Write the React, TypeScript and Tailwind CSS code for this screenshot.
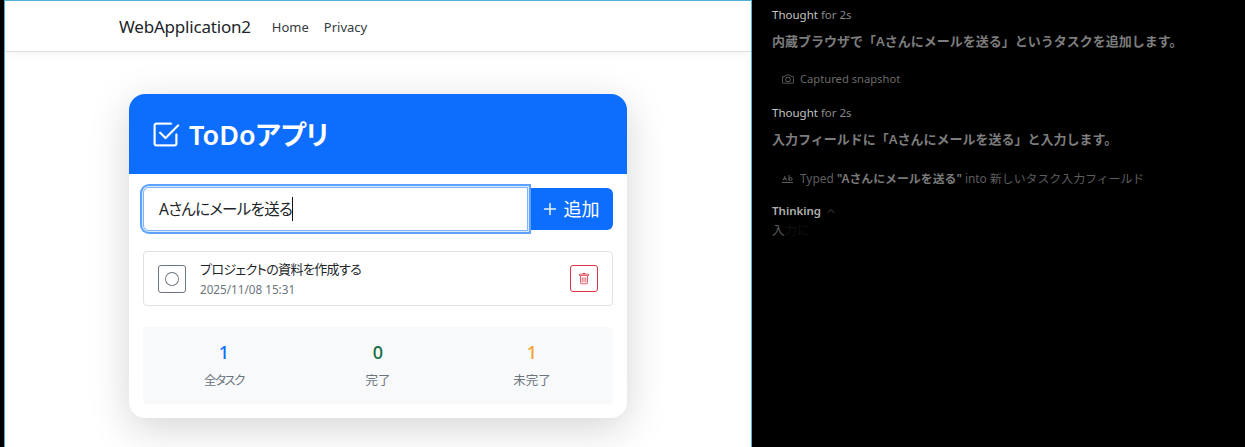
import { ChevronUp } from "lucide-react";
import { BsCheck2Square, BsPlusLg, BsTrash, BsCircle, BsCamera } from "react-icons/bs";

const FONT = "font-['Noto_Sans','Noto_Sans_CJK_JP',sans-serif]";

function Stat({ value, label, color, labelClass = "" }: { value: string; label: string; color: string; labelClass?: string }) {
  return (
    <div className="flex flex-1 flex-col items-center">
      <div className={`text-[18px] leading-[26px] font-medium ${color}`}>{value}</div>
      <div className={`mt-[7px] text-[12.5px] leading-[18px] text-[#6c757d] [font-feature-settings:'palt'] ${labelClass}`}>{label}</div>
    </div>
  );
}

function Todo() {
  return (
    <div className="mx-auto mt-[42px] w-[498px] rounded-[16px] bg-white shadow-[0_10px_40px_rgba(0,0,0,0.17)]">
      <div className="flex h-[80px] items-center gap-[9px] rounded-t-[16px] bg-[#0d6efd] px-[22px] text-white">
        <BsCheck2Square size={29} className="stroke-[0.2]" />
        <h1 className="text-[27px] leading-none font-semibold [font-feature-settings:'palt']">ToDoアプリ</h1>
      </div>
      <div className="px-[14px] pt-[13px] pb-[14px]">
        {/* input + add */}
        <div className="flex items-center">
          <div className="relative z-10 flex h-[44px] w-[385px] items-center rounded-l-[6px] border border-[#7db3fd] bg-white pl-[15px] text-[15.5px] tracking-[-0.7px] text-[#212529] shadow-[0_0_0_1px_#d8e8ff,0_0_0_3px_#5ea2fe] [font-feature-settings:'palt']">
            <span className="border-r border-[#111] leading-[24px]">Aさんにメールを送る</span>
          </div>
          <button className="flex h-[42px] flex-1 items-center justify-center gap-[6px] rounded-r-[6px] bg-[#0d6efd] text-[18px] text-white">
            <BsPlusLg size={16} className="stroke-[0.4]" />
            追加
          </button>
        </div>
        {/* item */}
        <div className="mt-[20px] flex h-[55px] items-center rounded-[4px] border border-[#dee2e6] px-[14px]">
          <div className="flex h-[28px] w-[28px] items-center justify-center rounded-[3px] border border-[#6c757d] text-[#6c757d]">
            <BsCircle size={14} />
          </div>
          <div className="ml-[14px] flex-1">
            <div className="-mt-[1px] text-[13px] leading-[18px] tracking-[-0.6px] text-[#212529] [font-feature-settings:'palt']">プロジェクトの資料を作成する</div>
            <div className="mt-[3px] text-[11.7px] leading-[16px] text-[#6c757d]">2025/11/08 15:31</div>
          </div>
          <button className="flex h-[27px] w-[28px] items-center justify-center rounded-[3px] border border-[#dc3545] text-[#dc3545]">
            <BsTrash size={12} />
          </button>
        </div>
        {/* stats */}
        <div className="mt-[21px] flex h-[77px] items-center rounded-[4px] bg-[#f8f9fa] px-[4px] pb-[3px]">
          <Stat value="1" label="全タスク" color="text-[#0d6efd]" labelClass="tracking-[-1.5px]" />
          <Stat value="0" label="完了" color="text-[#146c43]" />
          <Stat value="1" label="未完了" color="text-[#f4a331]" />
        </div>
      </div>
    </div>
  );
}

function Thought() {
  return (
    <div className="text-[11.5px] leading-[16px] text-[#c4c4c4]">
      Thought <span className="text-[#8a8a8a]">for 2s</span>
    </div>
  );
}

export default function App() {
  return (
    <div className={`${FONT} flex h-[447px] w-[1245px] overflow-hidden bg-black`}>
      {/* browser pane */}
      <div className="ml-[4px] h-full w-[748px] overflow-hidden border-x border-t border-[#4fb3d9] bg-white">
        <nav className="flex h-[51px] items-center border-b border-[#dee2e6] bg-white pt-[2px] pl-[114px] shadow-[0_2px_8px_rgba(0,0,0,0.05)]">
          <span className="text-[17px] tracking-[-0.2px] text-[#212529]">WebApplication2</span>
          <span className="mt-[2px] ml-[21px] text-[13px] text-[#343a40]">Home</span>
          <span className="mt-[2px] ml-[15px] text-[13px] text-[#343a40]">Privacy</span>
        </nav>
        <Todo />
      </div>
      {/* agent pane */}
      <div className="flex-1 pt-[7px] pl-[20px]">
        <Thought />
        <p className="mt-[9px] text-[13px] leading-[18px] font-semibold text-[#7d7d7d]">内蔵ブラウザで「Aさんにメールを送る」というタスクを追加します。</p>
        <div className="mt-[21px] flex items-center gap-[6px] pl-[10px] text-[11.2px] leading-[16px] text-[#6a6a6a]">
          <BsCamera size={12} />
          Captured snapshot
        </div>
        <div className="mt-[18px]">
          <Thought />
        </div>
        <p className="mt-[9px] text-[13px] leading-[18px] font-semibold text-[#7d7d7d]">入力フィールドに「Aさんにメールを送る」と入力します。</p>
        <div className="mt-[22px] flex items-center gap-[6px] pl-[9px] text-[11.9px] leading-[16px] text-[#5e5e5e]">
          <svg width="13" height="12" viewBox="0 0 13 12" fill="none" stroke="currentColor" strokeWidth="1">
            <path d="M1 10.5h11M2 8.5 3.8 4.5l1.8 4M2.7 7h2.2M8 3v5.5M8 7a1.5 1.5 0 1 1 3 0 1.5 1.5 0 1 1-3 0" />
          </svg>
          <span>
            Typed <span className="font-semibold text-[#7a7a7a]">"Aさんにメールを送る"</span> into 新しいタスク入力フィールド
          </span>
        </div>
        <div className="mt-[17px] flex items-center gap-[4px] text-[11.5px] leading-[16px] font-semibold text-[#b0b0b0]">
          Thinking
          <ChevronUp size={12} className="text-[#4a4a4a]" />
        </div>
        <div className="mt-[3px] text-[12.5px] leading-[18px]">
          <span className="text-[#5e5e5e]">入</span>
          <span className="text-[#101010]">力に</span>
        </div>
      </div>
    </div>
  );
}
